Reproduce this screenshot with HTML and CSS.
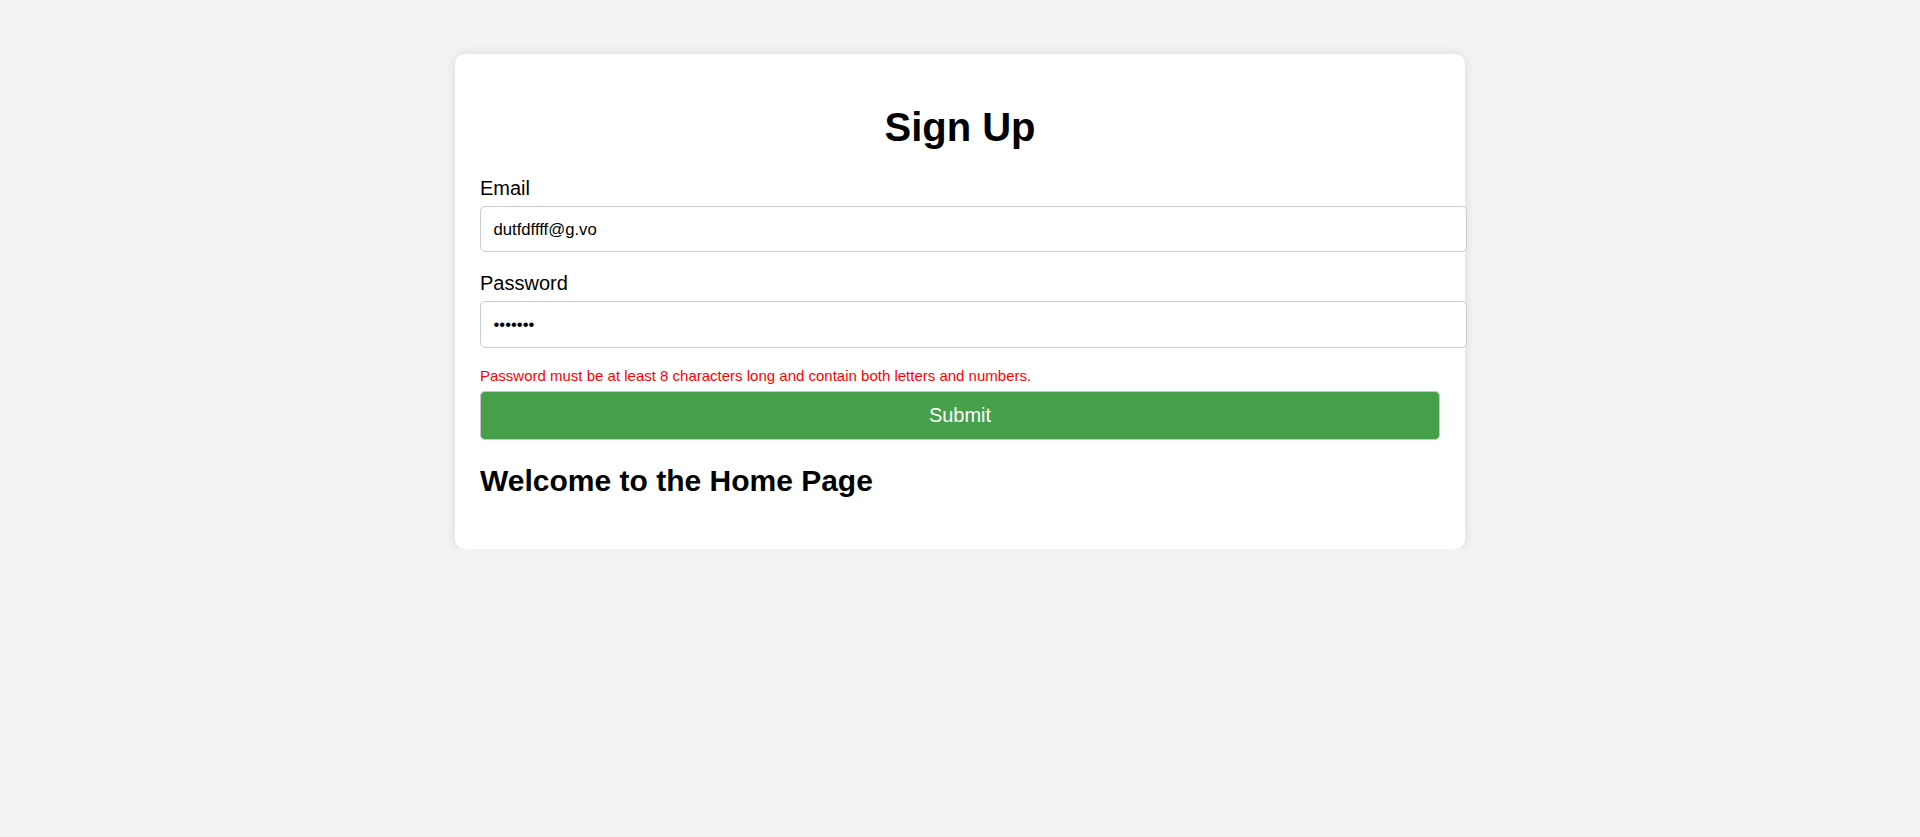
FILE: index.html
```html
<!DOCTYPE html>
<html lang="en">
<head>
<meta charset="utf-8">
<title>Sign Up</title>
<link rel="stylesheet" href="styles.css">
</head>
<body>
  <main class="card">
    <h1 class="title">Sign Up</h1>
    <form class="form">
      <label class="label" for="email">Email</label>
      <input class="field" id="email" type="email" value="dutfdffff@g.vo">
      <label class="label" for="password">Password</label>
      <input class="field" id="password" type="password" value="1234567">
      <p class="error">Password must be at least 8 characters long and contain both letters and numbers.</p>
      <button class="submit" type="button">Submit</button>
    </form>
    <h2 class="welcome">Welcome to the Home Page</h2>
  </main>
</body>
</html>
```

FILE: styles.css
```css
html, body {
  margin: 0;
  padding: 0;
}

body {
  background: #f3f3f3;
  font-family: "Liberation Sans", Arial, sans-serif;
  color: #000;
  padding-top: 54px;
}

.card {
  width: 960px;
  margin: 0 auto;
  padding: 25px;
  background: #fff;
  border-radius: 10px;
  box-shadow: 0 0 12px rgba(0, 0, 0, 0.1);
}

.title {
  margin: 26px 0 26.5px;
  font-size: 40px;
  font-weight: bold;
  text-align: center;
}

.form {
  display: flex;
  flex-direction: column;
}

.label {
  display: block;
  font-size: 20px;
  line-height: 23px;
  margin-bottom: 6.5px;
}

.field {
  display: block;
  width: 960px;
  margin: 0 0 19.5px;
  padding: 12.6px 12.5px;
  border: 1px solid #ccc;
  border-radius: 5px;
  font-family: "Liberation Sans", Arial, sans-serif;
  font-size: 16.7px;
  line-height: 19.2px;
  color: #000;
  background: #fff;
  box-sizing: content-box;
  outline: none;
}

.error {
  margin: 0 0 6px;
  color: #ff0000;
  font-size: 15px;
  line-height: 17.25px;
}

.submit {
  display: block;
  width: 960px;
  padding: 12.2px 0;
  border: 1px solid #c9c9c9;
  border-radius: 5px;
  background: #45a049;
  color: #fff;
  font-family: "Liberation Sans", Arial, sans-serif;
  font-size: 20px;
  line-height: 23px;
  cursor: pointer;
}

.welcome {
  margin: 24.5px 0 25px;
  font-size: 30px;
  line-height: 34.5px;
  font-weight: bold;
}
```
